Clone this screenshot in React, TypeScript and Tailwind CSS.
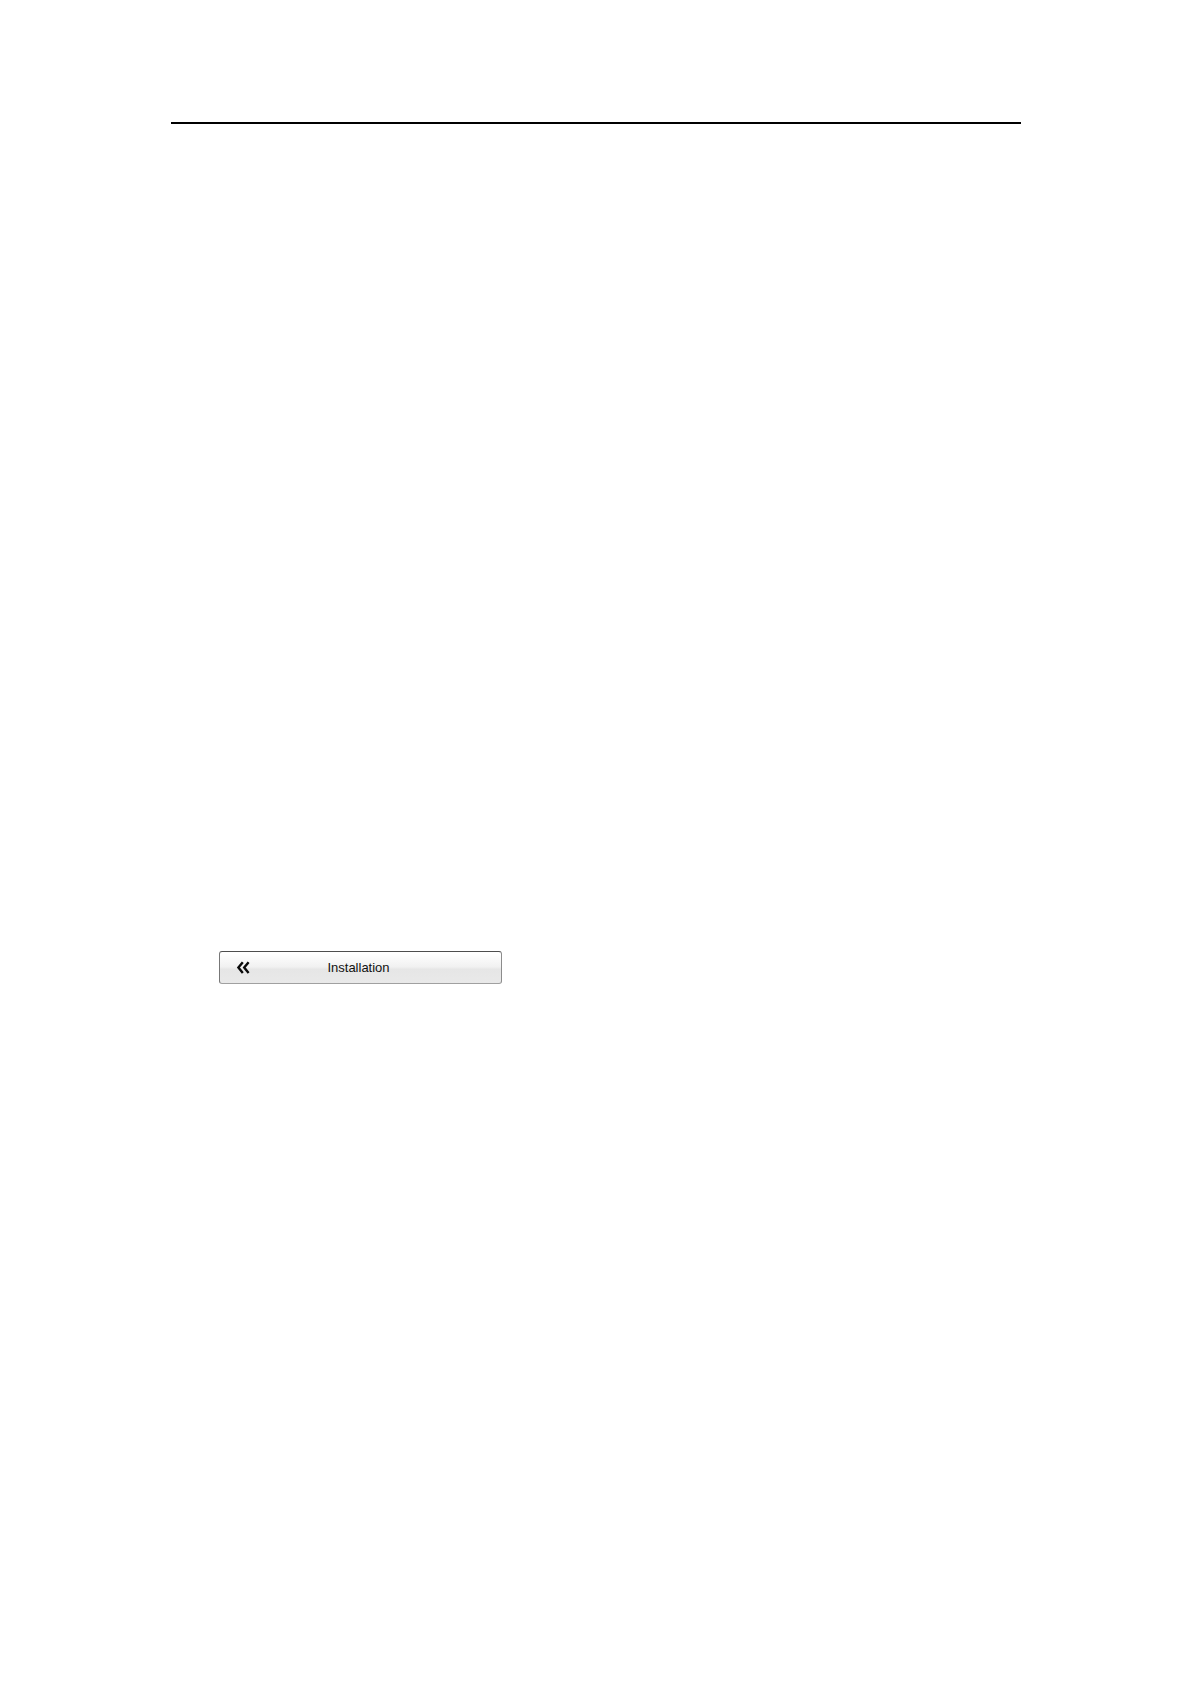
function DoubleChevronLeft() {
  return (
    <svg
      viewBox="0 0 14 14"
      className="size-[14px] shrink-0"
      fill="none"
      stroke="#0a0a0a"
      strokeWidth="2.4"
      aria-hidden="true"
    >
      <path d="M6.8 1.2 2.4 6.6 6.8 12" />
      <path d="M12.6 1.2 8.2 6.6l4.4 5.4" />
    </svg>
  );
}

export default function App() {
  return (
    <main className="min-h-screen bg-white pt-[122px] pr-[170px] pl-[171px] font-['Liberation_Sans',Arial,sans-serif]">
      <hr className="h-[2px] w-full border-0 bg-black" />
      <div className="px-12 pt-[827px]">
        <button
          type="button"
          className="flex h-[33px] w-full max-w-[283px] items-center rounded-[3px] border border-t-[#4e4e4e] border-r-[#8c8c8c] border-b-[#a0a0a0] border-l-[#777777] bg-[linear-gradient(to_bottom,#ffffff_5%,#f1f1f1_48%,#e6e6e6_56%,#e9e9e9_100%)] px-4 text-[13px] leading-4 text-[#111111]"
        >
          <DoubleChevronLeft />
          <span className="grow pr-[18px] text-center">Installation</span>
        </button>
      </div>
    </main>
  );
}
